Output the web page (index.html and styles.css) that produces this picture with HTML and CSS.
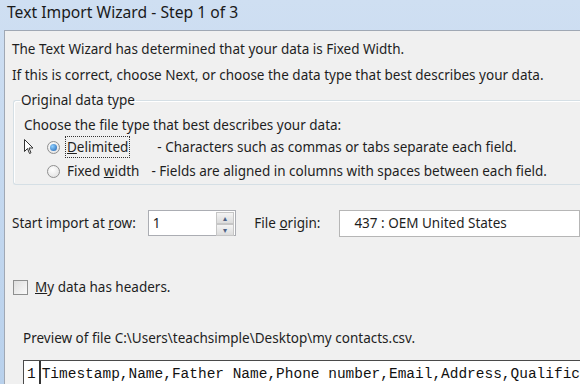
FILE: index.html
```html
<!DOCTYPE html>
<html>
<head>
    <title>Text Import Wizard</title>
    <link rel="stylesheet" href="styles.css">
</head>
<body>
    <div class="window">
        <div class="titlebar">Text Import Wizard - Step 1 of 3</div>
        <div class="dialog">
            <p class="intro">The Text Wizard has determined that your data is Fixed Width.</p>
            <p class="intro">If this is correct, choose Next, or choose the data type that best describes your data.</p>

            <fieldset class="group">
                <legend>Original data type</legend>
                <div class="group-caption">Choose the file type that best describes your data:</div>
                <div class="radio-row">
                    <span class="cursor">
                        <svg width="10" height="16" viewBox="0 0 10 16"><path d="M0.5 0.5 L0.5 12.5 L3.5 9.5 L5.5 14.5 L7 13.8 L5 9 L9 9 Z" fill="#fff" stroke="#333" stroke-width="1"/></svg>
                    </span>
                    <span class="radio checked"></span>
                    <span class="radio-label focused"><u>D</u>elimited</span>
                    <span class="radio-desc">- Characters such as commas or tabs separate each field.</span>
                </div>
                <div class="radio-row">
                    <span class="cursor"></span>
                    <span class="radio"></span>
                    <span class="radio-label">Fixed <u>w</u>idth</span>
                    <span class="radio-desc desc-2">- Fields are aligned in columns with spaces between each field.</span>
                </div>
            </fieldset>

            <div class="import-row">
                <span class="field-label">Start import at <u>r</u>ow:</span>
                <div class="spin">
                    <span class="spin-value">1</span>
                    <span class="spin-buttons">
                        <span class="spin-btn">&#9652;</span>
                        <span class="spin-btn">&#9662;</span>
                    </span>
                </div>
                <span class="field-label origin-label">File <u>o</u>rigin:</span>
                <div class="combo">437 : OEM United States</div>
            </div>

            <div class="check-row">
                <span class="checkbox"></span>
                <span><u>M</u>y data has headers.</span>
            </div>

            <div class="preview-label">Preview of file C:\Users\teachsimple\Desktop\my contacts.csv.</div>
            <div class="preview">
                <div class="preview-line">
                    <span class="line-no">1</span>
                    <span class="line-text">Timestamp,Name,Father Name,Phone number,Email,Address,Qualific</span>
                </div>
            </div>
        </div>
    </div>
</body>
</html>
```

FILE: styles.css
```css
body {
    margin: 0;
    padding: 0;
    width: 580px;
    height: 384px;
    overflow: hidden;
    font-family: "Noto Sans", sans-serif;
    font-size: 13.5px;
    color: #1e1e1e;
    background-color: #c4d8ef;
}
.window {
    padding-left: 4px;
    background: linear-gradient(to bottom, #cfdff2, #b9d1ec);
    height: 384px;
}
.titlebar {
    height: 30px;
    line-height: 25px;
    margin-left: 3px;
    font-size: 15.7px;
    color: #1a1a1a;
    white-space: nowrap;
}
.dialog {
    background-color: #f0f0f0;
    border-top: 1px solid #a0a8b4;
    border-left: 1px solid #a0a8b4;
    padding: 5px 0 0 7px;
    height: 360px;
    overflow: hidden;
}
.intro {
    margin: 0;
    line-height: 26px;
    white-space: nowrap;
}
.group {
    margin: 2px 0 0 1px;
    padding: 0 0 1px 10px;
    border: 1px solid #d5dfe5;
    border-radius: 3px;
    border-right: none;
    width: 600px;
    box-shadow: inset 1px 1px 0 #fff;
}
.group legend {
    padding: 0 1px;
    margin-left: -4px;
    line-height: 20px;
}
.group-caption {
    line-height: 20px;
    margin-top: 5px;
    white-space: nowrap;
}
.radio-row {
    display: flex;
    align-items: center;
    height: 24px;
    white-space: nowrap;
}
.cursor {
    width: 23px;
    display: flex;
    align-items: center;
}
.radio {
    width: 11px;
    height: 11px;
    border-radius: 50%;
    border: 1px solid #8f8f8f;
    background: radial-gradient(circle at 40% 35%, #fff, #dcdcdc);
    margin-right: 7px;
    position: relative;
}
.radio.checked::after {
    content: "";
    position: absolute;
    left: 2px;
    top: 2px;
    width: 7px;
    height: 7px;
    border-radius: 50%;
    background: radial-gradient(circle at 35% 35%, #8fd0ff, #1b5fb0);
}
.radio-label {
    padding: 1px 1px;
    border: 1px dotted transparent;
    margin-left: -2px;
}
.radio-label.focused {
    border-color: #333;
}
.radio-desc {
    margin-left: 27px;
}
.desc-2 {
    margin-left: 10px;
}
.import-row {
    display: flex;
    align-items: center;
    margin-top: 24px;
    height: 28px;
}
.field-label {
    white-space: nowrap;
}
.spin {
    margin-left: 12px;
    width: 96px;
    height: 26px;
    border: 1px solid #abadb3;
    background-color: #fff;
    display: flex;
    box-sizing: border-box;
}
.spin-value {
    flex: 1;
    line-height: 24px;
    padding-left: 4px;
}
.spin-buttons {
    width: 18px;
    display: flex;
    flex-direction: column;
    padding: 1px;
}
.spin-btn {
    flex: 1;
    font-size: 8px;
    line-height: 10px;
    text-align: center;
    color: #4d6185;
    background: linear-gradient(to bottom, #f4f4f4, #dcdcdc);
    border: 1px solid #c6c6c6;
}
.origin-label {
    margin-left: 18px;
}
.combo {
    margin-left: 19px;
    width: 260px;
    height: 27px;
    border: 1px solid #b6b6b6;
    background-color: #fff;
    line-height: 25px;
    padding-left: 14px;
    box-sizing: border-box;
    white-space: nowrap;
}
.check-row {
    display: flex;
    align-items: center;
    margin-top: 41px;
    height: 18px;
    margin-left: 1px;
}
.checkbox {
    width: 13px;
    height: 13px;
    border: 1px solid #8e8f8f;
    background: linear-gradient(135deg, #dedede, #fafafa);
    margin-right: 7px;
}
.preview-label {
    margin-top: 32px;
    margin-left: 11px;
    line-height: 20px;
    white-space: nowrap;
}
.preview {
    margin-top: 12px;
    margin-left: 11px;
    border-top: 1px solid #4a4a4a;
    border-left: 1px solid #4a4a4a;
    background-color: #fff;
    height: 40px;
}
.preview-line {
    display: flex;
    font-family: "Liberation Mono", monospace;
    font-size: 14.47px;
    line-height: 26px;
    white-space: nowrap;
    color: #111;
}
.line-no {
    width: 14px;
    padding-left: 3px;
    border-right: 2px solid #333;
    border-bottom: 1px solid #999;
}
.line-text {
    padding-left: 1px;
}
```
